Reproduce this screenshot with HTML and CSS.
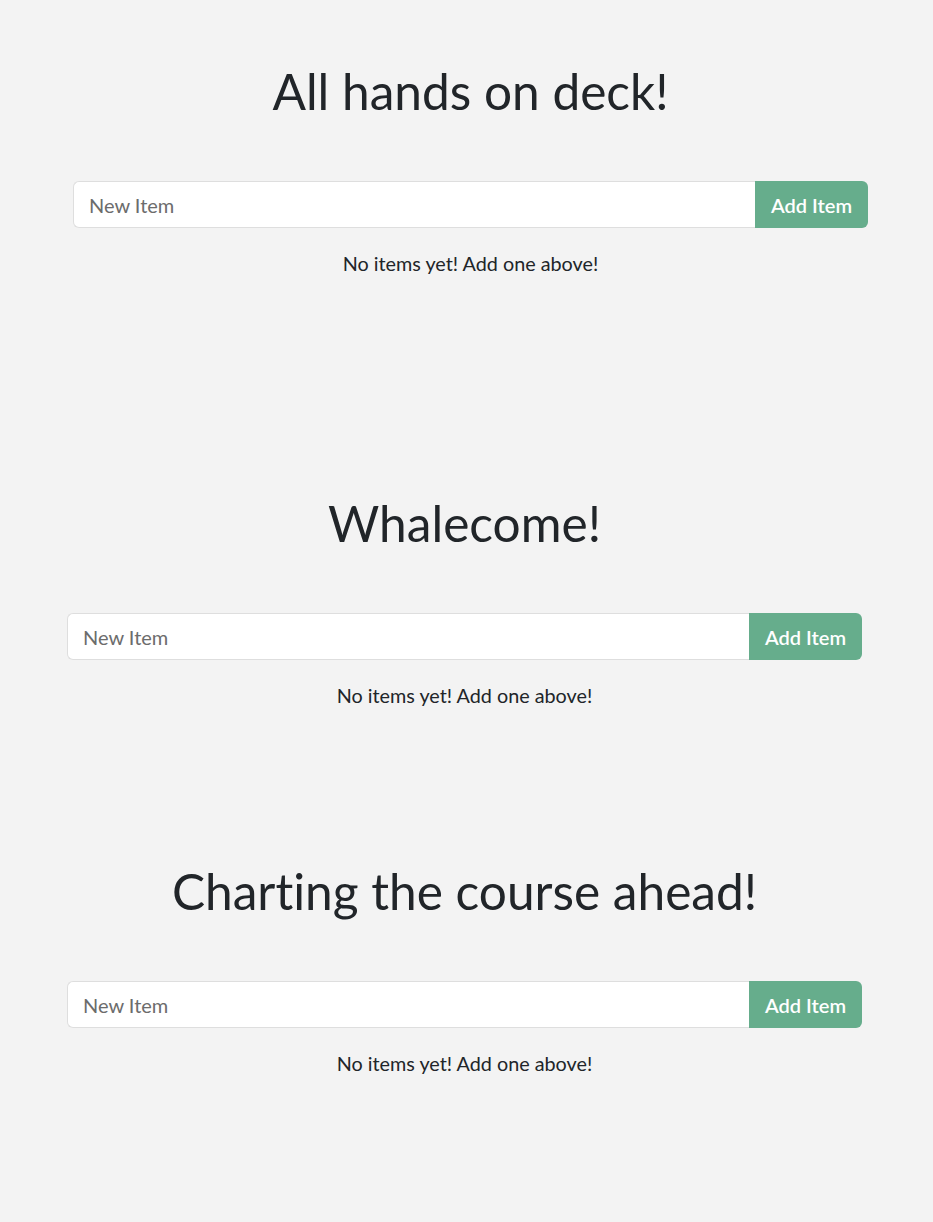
FILE: index.html
```html
<!DOCTYPE html>
<html lang="en">
<head>
<meta charset="utf-8">
<title>Lists</title>
<link rel="stylesheet" href="styles.css">
</head>
<body>
<main class="page">
  <section class="list list--first">
    <h1 class="list-title">All hands on deck!</h1>
    <form class="input-group">
      <input class="form-control" type="text" placeholder="New Item">
      <button class="btn-add" type="button">Add Item</button>
    </form>
    <p class="empty">No items yet! Add one above!</p>
  </section>
  <section class="list list--second">
    <h1 class="list-title">Whalecome!</h1>
    <form class="input-group">
      <input class="form-control" type="text" placeholder="New Item">
      <button class="btn-add" type="button">Add Item</button>
    </form>
    <p class="empty">No items yet! Add one above!</p>
  </section>
  <section class="list list--third">
    <h1 class="list-title">Charting the course ahead!</h1>
    <form class="input-group">
      <input class="form-control" type="text" placeholder="New Item">
      <button class="btn-add" type="button">Add Item</button>
    </form>
    <p class="empty">No items yet! Add one above!</p>
  </section>
</main>
</body>
</html>
```

FILE: styles.css
```css
* { box-sizing: border-box; }

html, body {
  margin: 0;
  padding: 0;
  background: #f3f3f3;
}

body {
  font-family: Lato, "Liberation Sans", sans-serif;
  font-variant-ligatures: none;
  color: #212529;
  height: 1222px;
  overflow: hidden;
}

.page {
  width: 929px;
  display: flex;
  flex-direction: column;
  align-items: center;
}

.list {
  width: 795px;
  display: flex;
  flex-direction: column;
  align-items: stretch;
}

.list--first {
  width: 807px;
  padding-left: 12px;
  padding-top: 61px;
}

.list--second {
  padding-top: 218px;
}

.list--third {
  padding-top: 154px;
}

.list-title {
  margin: 0 0 60px;
  font-size: 49.6px;
  font-weight: 400;
  line-height: 60px;
  text-align: center;
}

.input-group {
  display: flex;
  margin: 0;
  height: 47px;
}

.form-control {
  flex: 1;
  min-width: 0;
  height: 47px;
  padding: 0 15px;
  font-family: inherit;
  font-size: 20px;
  color: #495057;
  background: #fff;
  border: 1px solid #dedede;
  border-right: 0;
  border-radius: 6px 0 0 6px;
  outline: none;
}

.form-control::placeholder {
  color: #6c6c6c;
}

.btn-add {
  flex: none;
  width: 113px;
  height: 47px;
  padding: 0;
  font-family: inherit;
  font-size: 20px;
  font-weight: 600;
  color: #fff;
  background: #66ad8c;
  border: 0;
  border-radius: 0 6px 6px 0;
}

.empty {
  margin: 23px 0 0;
  font-size: 19.8px;
  line-height: 24px;
  text-align: center;
}
```
